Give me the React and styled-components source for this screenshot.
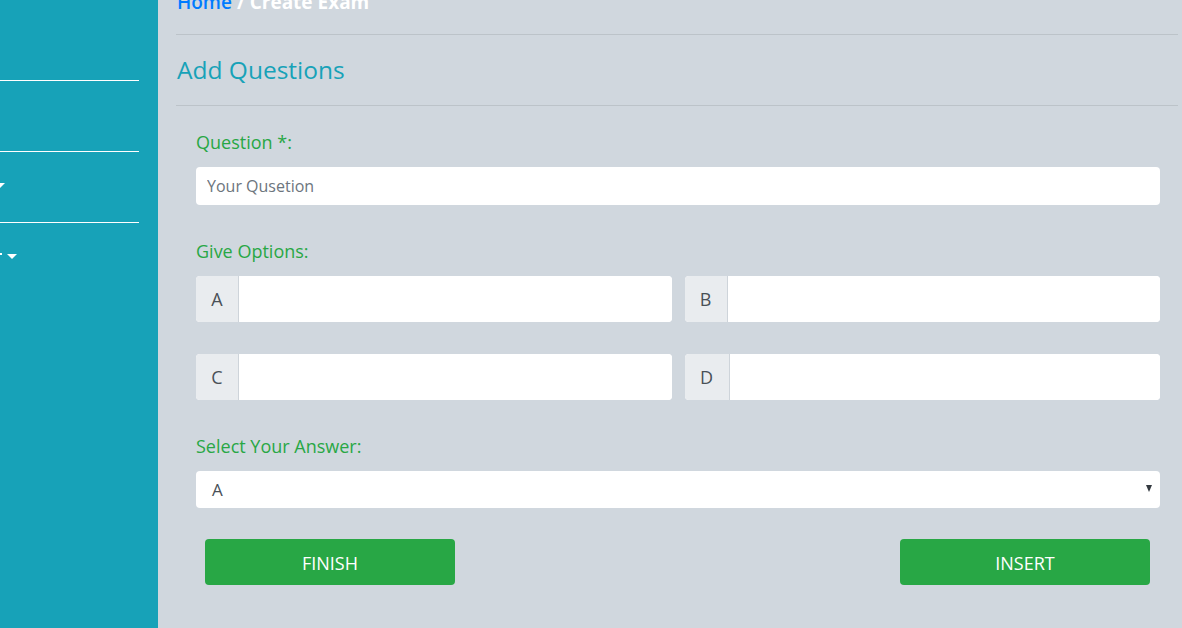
import React from "react";
import styled, { createGlobalStyle } from "styled-components";

const Global = createGlobalStyle`
  html, body { margin: 0; padding: 0; }
  body { font-family: "Open Sans", "Noto Sans", sans-serif; background: #d0d7de; overflow: hidden; }
  * { box-sizing: border-box; }
`;

const Shell = styled.div`
  display: flex;
  width: 1182px;
  height: 628px;
  overflow: hidden;
`;

const Sidebar = styled.nav`
  width: 158px;
  flex: none;
  background: #17a2b8;
  display: flex;
  flex-direction: column;
  padding-top: 80px;
`;

const SideItem = styled.div`
  height: 71px;
  width: 139px;
  border-top: 1px solid #ffffff;
  display: flex;
  align-items: center;
`;

const Caret = styled.span`
  width: 0;
  height: 0;
  border-left: 5px solid transparent;
  border-right: 5px solid transparent;
  border-top: 5px solid #ffffff;
  margin-top: -4px;
  margin-left: ${(p) => p.$ml || 0}px;
`;

const Tick = styled.span`
  width: 2px;
  height: 2px;
  background: #fff;
  margin-right: 5px;
  margin-top: -8px;
`;

const Main = styled.main`
  flex: 1;
  padding: 0 4px 0 18px;
  display: flex;
  flex-direction: column;
`;

const Breadcrumb = styled.div`
  margin-top: -10px;
  height: 45px;
  font-size: 19px;
  font-weight: 600;
  line-height: 24px;
  padding-left: 1px;
  border-bottom: 1px solid #bcc3c9;
`;

const Crumb = styled.span`
  color: ${(p) => (p.$active ? "#ffffff" : "#007bff")};
  font-weight: ${(p) => (p.$active ? 700 : 600)};
`;

const HeadingBar = styled.div`
  height: 71px;
  display: flex;
  align-items: center;
  border-bottom: 1px solid #bcc3c9;
  padding-left: 1px;
`;

const Heading = styled.h2`
  margin: 0;
  font-size: 24.5px;
  font-weight: 400;
  color: #17a2b8;
  padding-bottom: 2px;
`;

const Form = styled.form`
  padding: 24px 18px 0 20px;
  display: flex;
  flex-direction: column;
`;

const Label = styled.label`
  color: #28a745;
  font-size: 18px;
  line-height: 24px;
  margin-bottom: 13px;
`;

const TextInput = styled.input`
  height: 38px;
  width: 100%;
  border: none;
  border-radius: 4px;
  background: #fff;
  padding: 0 11px;
  font-family: inherit;
  font-size: 16px;
  color: #495057;
  outline: none;
  &::placeholder { color: #6c757d; }
`;

const Spacer = styled.div`
  height: ${(p) => p.$h}px;
`;

const OptionGrid = styled.div`
  display: grid;
  grid-template-columns: 1fr 1fr;
  column-gap: 13px;
  row-gap: 32px;
`;

const Group = styled.div`
  display: flex;
  height: 46px;
  border-radius: 4px;
  overflow: hidden;
  background: #fff;
`;

const Prepend = styled.span`
  width: ${(p) => p.$w || 43}px;
  flex: none;
  background: #e9ecef;
  border-right: 1px solid #ced4da;
  display: flex;
  align-items: center;
  justify-content: center;
  font-size: 18px;
  color: #495057;
`;

const GroupInput = styled.input`
  flex: 1;
  border: none;
  outline: none;
  background: #fff;
  min-width: 0;
`;

const SelectBox = styled.div`
  height: 37px;
  background: #fff;
  border-radius: 4px;
  display: flex;
  align-items: center;
  justify-content: space-between;
  padding: 0 8px 0 16px;
  font-size: 17px;
  color: #495057;
`;

const SelectArrow = styled.span`
  width: 0;
  height: 0;
  border-left: 3.5px solid transparent;
  border-right: 3.5px solid transparent;
  border-top: 7px solid #343a40;
  margin-top: -2px;
`;

const Actions = styled.div`
  display: flex;
  justify-content: space-between;
  padding: 31px 10px 0 9px;
`;

const Button = styled.button`
  width: 250px;
  height: 46px;
  border: none;
  border-radius: 4px;
  background: #28a745;
  color: #fff;
  font-family: inherit;
  font-size: 18px;
  text-transform: uppercase;
  padding-top: 2px;
  cursor: pointer;
`;

export default function App() {
  return (
    <>
      <Global />
      <Shell>
        <Sidebar>
          <SideItem />
          <SideItem>
            <Caret $ml={-5} />
          </SideItem>
          <SideItem>
            <Tick />
            <Caret />
          </SideItem>
        </Sidebar>
        <Main>
          <Breadcrumb>
            <Crumb>Home</Crumb> <Crumb $active>/ Create Exam</Crumb>
          </Breadcrumb>
          <HeadingBar>
            <Heading>Add Questions</Heading>
          </HeadingBar>
          <Form onSubmit={(e) => e.preventDefault()}>
            <Label>Question *:</Label>
            <TextInput placeholder="Your Qusetion" />
            <Spacer $h={34} />
            <Label>Give Options:</Label>
            <OptionGrid>
              <Group>
                <Prepend>A</Prepend>
                <GroupInput />
              </Group>
              <Group>
                <Prepend>B</Prepend>
                <GroupInput />
              </Group>
              <Group>
                <Prepend>C</Prepend>
                <GroupInput />
              </Group>
              <Group>
                <Prepend $w={45}>D</Prepend>
                <GroupInput />
              </Group>
            </OptionGrid>
            <Spacer $h={34} />
            <Label>Select Your Answer:</Label>
            <SelectBox>
              <span>A</span>
              <SelectArrow />
            </SelectBox>
            <Actions>
              <Button type="button">Finish</Button>
              <Button type="button">Insert</Button>
            </Actions>
          </Form>
        </Main>
      </Shell>
    </>
  );
}
